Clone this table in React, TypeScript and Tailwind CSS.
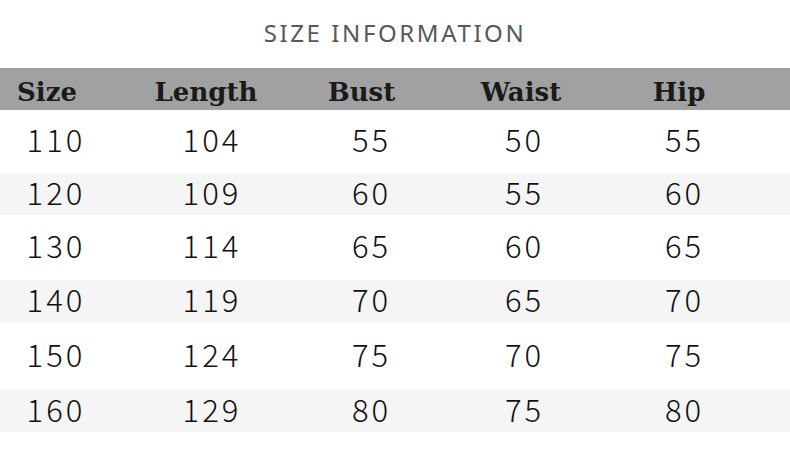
const headers = ['Size', 'Length', 'Bust', 'Waist', 'Hip'];

const rows = [
    ['110', '104', '55', '50', '55'],
    ['120', '109', '60', '55', '60'],
    ['130', '114', '65', '60', '65'],
    ['140', '119', '70', '65', '70'],
    ['150', '124', '75', '70', '75'],
    ['160', '129', '80', '75', '80'],
];

// band heights measured off the picture: white rows are taller than the grey ones
const rowClass = [
    'h-[63px] bg-white',
    'h-[42px] bg-[#f5f5f5]',
    'h-[65px] bg-white',
    'h-[42px] bg-[#f5f5f5]',
    'h-[68px] bg-white',
    'h-[42px] bg-[#f5f5f5]',
];

export default function App() {
    return (
        <div className="w-[790px] h-[470px] bg-white overflow-hidden">
            {/* title */}
            <div className="h-[68px] flex items-center justify-center">
                <h1 className="text-[24px] leading-none tracking-[2.6px] text-[#585858] font-['Noto_Sans',sans-serif] pb-[2px]">
                    SIZE INFORMATION
                </h1>
            </div>

            {/* header band */}
            <div className="h-[42px] bg-[#a1a1a1] grid grid-cols-[94px_224px_87px_232px_84px] items-center pt-[5px]">
                {headers.map((h) => (
                    <div
                        key={h}
                        className="text-center text-[26px] leading-none font-bold text-[#1a1a1a] font-['DejaVu_Serif',serif] whitespace-nowrap"
                    >
                        {h}
                    </div>
                ))}
            </div>

            {/* data rows */}
            {rows.map((row, i) => (
                <div
                    key={row[0]}
                    className={`grid grid-cols-[109px_203px_116px_190px_130px] items-center ${rowClass[i]}`}
                >
                    {row.map((v, j) => (
                        <div
                            key={j}
                            className="text-center text-[31px] leading-none font-light tracking-[3px] pl-[3px] pb-[6px] text-[#111] font-['Noto_Sans_CJK_SC','Noto_Sans',sans-serif]"
                        >
                            {v}
                        </div>
                    ))}
                </div>
            ))}
        </div>
    );
}
